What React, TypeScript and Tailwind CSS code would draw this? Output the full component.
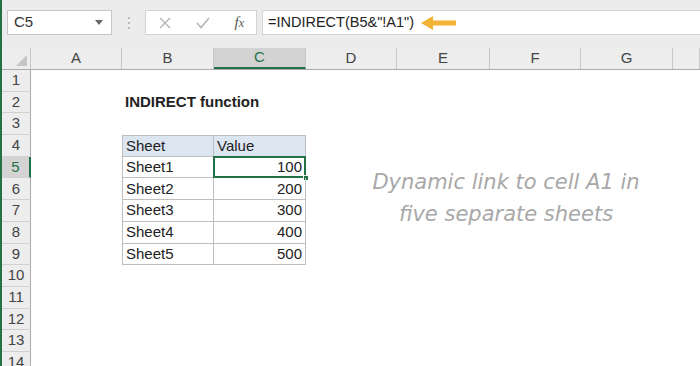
import React from "react";

const cols = [
  { label: "A", w: "w-[91px]" },
  { label: "B", w: "w-[92px]" },
  { label: "C", w: "w-[92px]" },
  { label: "D", w: "w-[91px]" },
  { label: "E", w: "w-[93px]" },
  { label: "F", w: "w-[91px]" },
  { label: "G", w: "w-[92px]" },
  { label: "", w: "flex-1" },
];

const data = [
  ["Sheet1", "100"],
  ["Sheet2", "200"],
  ["Sheet3", "300"],
  ["Sheet4", "400"],
  ["Sheet5", "500"],
];

const rowNums = Array.from({ length: 14 }, (_, i) => i + 1);

const NameBox = () => (
  <div className="ml-[5px] w-[105px] h-[25px] bg-white border border-[#c6c6c6] flex items-center justify-between pl-[6px] pr-[8px] text-[15px] text-[#333]">
    <span>C5</span>
    <svg width="8" height="5" viewBox="0 0 8 5">
      <path d="M0 0 L8 0 L4 5 Z" fill="#666" />
    </svg>
  </div>
);

const FormulaButtons = () => (
  <div className="w-[112px] h-[25px] bg-white border border-[#d4d4d4] flex items-center justify-between pl-[13px] pr-[12px]">
    <svg width="12" height="12" viewBox="0 0 12 12">
      <path d="M1 1 L11 11 M11 1 L1 11" stroke="#b5b5b5" strokeWidth="1.4" fill="none" />
    </svg>
    <svg width="14" height="12" viewBox="0 0 14 12">
      <path d="M1 6 L5 10.5 L13 1" stroke="#b5b5b5" strokeWidth="1.5" fill="none" />
    </svg>
    <span className="font-['Liberation_Serif'] italic text-[15px] text-[#555] leading-none">
      f<span className="text-[12px]">x</span>
    </span>
  </div>
);

const TopBar = () => (
  <div className="h-[48px] bg-[#ececec] flex items-start pt-[10px]">
    <NameBox />
    <div className="w-[33px] h-[25px] flex flex-col items-center justify-center gap-[3px]">
      <span className="w-[2px] h-[2px] bg-[#bdbdbd]" />
      <span className="w-[2px] h-[2px] bg-[#bdbdbd]" />
      <span className="w-[2px] h-[2px] bg-[#bdbdbd]" />
    </div>
    <FormulaButtons />
    <div className="ml-[5px] flex-1 h-[25px] bg-white border-y border-l border-[#d4d4d4] flex items-center pl-[5px] text-[14.5px] text-[#222]">
      <span>=INDIRECT(B5&amp;"!A1")</span>
      <svg className="ml-[7px]" width="36" height="14" viewBox="0 0 36 14">
        <path d="M0 7 L12 0 L12 4.5 L35 4.5 L35 9.5 L12 9.5 L12 14 Z" fill="#f2b233" />
      </svg>
    </div>
  </div>
);

const HeaderRow = () => (
  <div className="h-[22px] flex bg-[#ededed] border-b border-[#ababab]">
    <div className="w-[29px] h-full border-r border-[#c8c8c8] relative">
      <svg className="absolute right-[3px] bottom-[3px]" width="11" height="11" viewBox="0 0 11 11">
        <path d="M11 0 L11 11 L0 11 Z" fill="#c5c5c5" />
      </svg>
    </div>
    {cols.map((c) => (
      <div
        key={c.label}
        className={`${c.w} h-full flex items-center justify-center text-[15px] ${
          c.label === "C"
            ? "bg-[#d3d3d3] border-b-2 border-[#217346] text-[#217346] border-r border-r-[#c8c8c8]"
            : "text-[#444] border-r border-[#c8c8c8]"
        }`}
      >
        {c.label}
      </div>
    ))}
  </div>
);

const Cell = ({ w, className = "", children }: { w: string; className?: string; children?: React.ReactNode }) => (
  <div className={`${w} h-full flex items-center text-[15px] text-[#222] ${className}`}>{children}</div>
);

const SheetRow = ({ n }: { n: number }) => {
  const isHeader = n === 4;
  const dataRow = n >= 5 && n <= 9 ? data[n - 5] : null;
  const inTable = isHeader || dataRow;

  return (
    <div className="h-[21.7px] flex">
      <div
        className={`w-[29px] h-full flex items-center justify-center text-[15px] border-b border-[#d0d0d0] ${
          n === 5 ? "bg-[#d3d3d3] text-[#217346] border-r-2 border-r-[#217346]" : "bg-[#ededed] text-[#444] border-r border-r-[#ababab]"
        }`}
      >
        {n}
      </div>
      <Cell w="w-[91px]" />
      {inTable ? (
        <>
          <Cell
            w="w-[92px]"
            className={`pl-[3px] border-l border-r border-b border-[#bfbfbf] ${isHeader ? "bg-[#dce6f1] border-t" : ""}`}
          >
            {isHeader ? "Sheet" : dataRow![0]}
          </Cell>
          <Cell
            w="w-[92px]"
            className={`relative border-r border-b border-[#bfbfbf] ${
              isHeader ? "bg-[#dce6f1] border-t pl-[3px]" : "justify-end pr-[3px]"
            }`}
          >
            {isHeader ? "Value" : dataRow![1]}
            {n === 5 && (
              <>
                <div className="absolute -left-[1px] -top-[1px] -right-[1px] -bottom-[1px] border-2 border-[#217346]" />
                <div className="absolute -right-[4px] -bottom-[4px] w-[6px] h-[6px] bg-[#217346] border border-white" />
              </>
            )}
          </Cell>
        </>
      ) : (
        <>
          <Cell w="w-[92px]" className="pl-[3px] font-bold">
            {n === 2 ? <span className="whitespace-nowrap">INDIRECT function</span> : null}
          </Cell>
          <Cell w="w-[92px]" />
        </>
      )}
      <Cell w="flex-1" />
    </div>
  );
};

export default function App() {
  return (
    <div className="w-[700px] h-[366px] overflow-hidden bg-white border-l-2 border-[#217346] font-['Liberation_Sans',Arial,sans-serif] relative">
      <TopBar />
      <HeaderRow />
      <div className="flex flex-col">
        {rowNums.map((n) => (
          <SheetRow key={n} n={n} />
        ))}
      </div>
      <div className="absolute left-[344px] top-[166px] w-[320px] text-center font-['DejaVu_Sans',sans-serif] italic text-[21px] leading-[32px] text-[#a8a8a8]">
        <div>Dynamic link to cell A1 in</div>
        <div>five separate sheets</div>
      </div>
    </div>
  );
}
